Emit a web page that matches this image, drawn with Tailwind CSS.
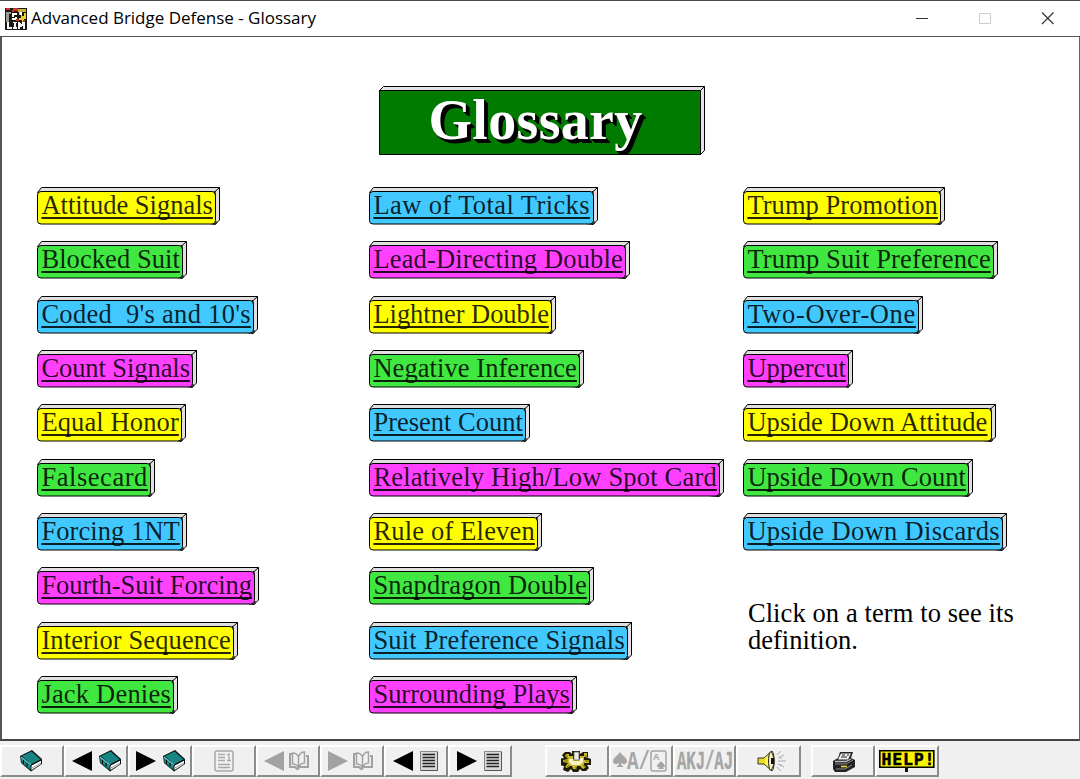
<!DOCTYPE html>
<html lang="en">
<head>
  <meta charset="UTF-8" />
  <meta name="viewport" content="width=device-width, initial-scale=1.0"/>
  <title>Advanced Bridge Defense - Glossary</title>
  <script src="https://cdn.jsdelivr.net/npm/@tailwindcss/browser@4"></script>
</head>
<body class="w-[1080px] h-[779px] overflow-hidden bg-[#f0f0f0] text-black flex flex-col">

  <!-- icons shared by several toolbar buttons -->
  <svg class="hidden">
    <symbol id="book" viewBox="0 0 24 22">
      <path d="M1 6 13 0l10 9v5L12 21.500 2 13z" fill="#0a1414"/>
      <path d="M3 6 12.500 1.500l9 8-9.500 5z" fill="#188484"/>
      <path d="M2 7.500l9.500 8v4.500L2.500 12.500z" fill="#188484"/>
      <path d="M2 7l10 8" stroke="#6accd0" stroke-width="1.200" fill="none"/>
      <path d="M12.500 15.500 22 10.500v3.500l-9.500 6z" fill="#fff"/>
      <path d="M13 18l9-5" stroke="#999" fill="none"/>
      <path d="M12 15.200l10-5.200" stroke="#000" fill="none"/>
      <path d="M4.500 10v3.500M8 13v3.500" stroke="#000" fill="none"/>
    </symbol>
    <symbol id="open-book" viewBox="0 0 22 20">
      <path d="M4 3H2v13h5l2 2 3-2h8V5h-2" fill="none" stroke="#a2a2a2" stroke-width="2"/>
      <path d="M4.500 2v11c3 0 5 1 6 4 1-3 3-5 6-5V1c-3 0-5 2-6 5-1-3-3-4-6-4zM10.500 6v10" fill="none" stroke="#a2a2a2" stroke-width="1.500"/>
    </symbol>
    <symbol id="page" viewBox="0 0 20 22">
      <path d="M1.500 1.500h17v19h-17z" fill="#d8d8d8" stroke="#888"/>
      <path d="M18.500 2v18.500H2" fill="none" stroke="#555"/>
      <path d="M3.500 4.500h12.500M3.500 7.500h12.500M3.500 10.500h12.500M3.500 13.500h12.500M3.500 16.500h12.500" stroke="#222" stroke-width="1.500"/>
    </symbol>
    <symbol id="left" viewBox="0 0 20 20"><path d="M0 10 20 0v20z" fill="currentColor"/></symbol>
    <symbol id="right" viewBox="0 0 20 20"><path d="M20 10 0 0v20z" fill="currentColor"/></symbol>
  </svg>

  <header class="h-[37px] shrink-0 flex items-center bg-white border-t border-t-[#4d454d] border-b border-b-[#555] pl-[5px]">
    <svg class="size-[22px] shrink-0" viewBox="0 0 22 22" shape-rendering="crispEdges">
      <path d="M0 0h22v22H0z" fill="#191814"/>
      <path d="M1 0h4v2h3V0h5v3H9v1H7V2H1z" fill="#d03028"/>
      <path d="M13 1h8v3h-8z" fill="#c9b23a"/>
      <path d="M1 4h5v2H4v8H1z" fill="#9c9a94"/>
      <path d="M7 5h5v2H9v2h3v3H7v-2h3V9H7z" fill="#fff"/>
      <path d="M14 4h3v4h2V5h2v6h-2v4h-2v-3h-3v-2h2V7h-2z" fill="#e8d428"/>
      <path d="M15 4h2v3h-2z" fill="#fff"/>
      <path d="M11 11h3v2h-3zM18 12h2v2h-2z" fill="#c03428"/>
      <path d="M2 14h2v5h3v2H2zM8 14h4v1h-1v4h1v2H8v-2h1v-4H8zM13 14h2l2 3v-3h3v7h-2v-4l-2 3-1-2v3h-2z" fill="#f4f4f4"/>
    </svg>
    <h1 class="ml-[4px] pb-[2px] flex-1 whitespace-nowrap text-[17px] leading-[22px] font-['Open_Sans',sans-serif]"><span data-fit="285" data-font="17px 'Open Sans'">Advanced Bridge Defense - Glossary</span></h1>
    <svg class="w-[160px] h-[35px] shrink-0 overflow-visible" viewBox="0 0 160 35" fill="none">
      <path d="M-4 17.500H8" stroke="#333"/>
      <path d="M59.500 12.500h11v10h-11z" stroke="#ccc"/>
      <path d="M122 11.500l11.500 11.500M133.500 11.500L122 23" stroke="#333" stroke-width="1.200"/>
    </svg>
  </header>

  <main class="h-[704px] shrink-0 bg-white border-l-2 border-l-[#555] border-r border-r-[#666] border-b-2 border-b-[#444]">
    <div class="pt-[49px] pl-[376.500px]">
      <div class="relative w-[327px] h-[70px]">
        <svg class="absolute inset-0 size-full" viewBox="0 0 327 70">
          <path d="M.5 4.500l4-4h321v64l-4 4z" fill="#e4e4e4" stroke="#000"/>
          <path d="M.5 4.500h321v64H.5z" fill="#007b00" stroke="#000"/>
          <path d="M321.500 4.500l4-4" stroke="#000"/>
        </svg>
        <h2 class="relative pl-[50px] text-white font-bold text-[56px] leading-[69px] whitespace-nowrap font-['Liberation_Serif',serif] [text-shadow:1px_1px_0_#000,2px_2px_0_#000,3px_3px_0_#000,4px_4px_0_#000]"><span data-fit="214" data-font="bold 56px 'Liberation Serif'">Glossary</span></h2>
      </div>
    </div>

    <div class="flex pt-[31px] pl-[35.400px] text-[26.500px] font-['Liberation_Serif',serif]">
      <ul id="col1" class="w-[332px] shrink-0 flex flex-col gap-[16.330px]"></ul>
      <ul id="col2" class="w-[374px] shrink-0 flex flex-col gap-[16.330px]"></ul>
      <div class="shrink-0">
        <ul id="col3" class="flex flex-col gap-[16.330px]"></ul>
        <p class="mt-[49px] ml-[4.500px] leading-[27px] whitespace-nowrap"><span data-fit="266" data-font="26.5px 'Liberation Serif'">Click on a term to see its</span><br><span data-fit="110" data-font="26.5px 'Liberation Serif'">definition.</span></p>
      </div>
    </div>
  </main>

  <footer id="toolbar" class="flex-1 flex items-start pt-[4px]">
    <button class="tb w-[64px] pr-0.5"><svg class="w-6 h-[22px]"><use href="#book"/></svg></button>
    <button class="tb w-[64px] pl-0.5"><svg class="size-5"><use href="#left"/></svg><svg class="w-6 h-[22px] ml-0.5"><use href="#book"/></svg></button>
    <button class="tb w-[64px] pl-0.5"><svg class="size-5"><use href="#right"/></svg><svg class="w-6 h-[22px] ml-0.5"><use href="#book"/></svg></button>
    <button class="tb w-[64px]">
      <svg class="w-5 h-[22px]" viewBox="0 0 20 22" fill="none" stroke="#a8a8a8">
        <rect x="1" y="1" width="18" height="20" rx="2" stroke-width="1.500"/>
        <path d="M4 4.500h7M4 7.500h7M4 10.500h7M4 14.500h12M4 17.500h12M13 5l2-1v6M13 10.500h4" stroke-width="1.300"/>
      </svg>
    </button>
    <button class="tb w-[64px] pr-0.5 text-[#a2a2a2]"><svg class="size-5"><use href="#left"/></svg><svg class="w-[22px] h-5"><use href="#open-book"/></svg></button>
    <button class="tb w-[64px] pr-0.5 text-[#a2a2a2]"><svg class="size-5"><use href="#right"/></svg><svg class="w-[22px] h-5"><use href="#open-book"/></svg></button>
    <button class="tb w-[64px]"><svg class="size-5 mr-0.5"><use href="#left"/></svg><svg class="w-5 h-[22px]"><use href="#page"/></svg></button>
    <button class="tb w-[64px]"><svg class="size-5 mr-0.5"><use href="#right"/></svg><svg class="w-5 h-[22px]"><use href="#page"/></svg></button>

    <button class="tb w-[64px] ml-[33px] pr-0.5">
      <svg class="w-[31px] h-[22px]" viewBox="0 0 31 22">
        <path d="M4 2h5l2 2V1h8v3l3-2h5v5h-2l5 2v6h-4l2 3-3 3h-4l-2-2-2 3h-5l-2-3-3 3-5-2 1-4-5-1V9l5-1-2-3z" fill="#1c1a04"/>
        <path d="M5 4h3v2h4v3h7V6h4V3h3v4h-3v3h5v3h-5v2l2 2-3 2-3-3h-3l-1 3h-3l-1-3H9l-3 2-2-1 3-4-5-1v-2l5-1-3-3z" fill="#c8b92a"/>
        <path d="M8 9h4v2h7V8h3v4l-3 3h-8l-3-3z" fill="#fff0c4"/>
        <path d="M13 2h5v8h-5z" fill="#ececec" stroke="#666" stroke-width=".8"/>
        <path d="M6 5v3M3 11h4M8 15l-2 2M15 17v3M22 15l2 2M25 5v3M24 11h4" stroke="#7a7010"/>
      </svg>
    </button>
    <button class="tb w-[64px] pr-0.5">
      <svg class="w-[54px] h-[22px] overflow-visible" viewBox="0 0 54 22" fill="none" stroke="#a5a5a5">
        <path d="M7 2c-2 3-7 6-7 9 0 4 5 4 6 1 0 3-1 4-3 5h8c-2-1-3-2-3-5 1 3 6 3 6-1 0-3-5-6-7-9z" fill="#a5a5a5" stroke="none"/>
        <text x="14" y="18.500" font-family="Liberation Mono,monospace" font-size="25" font-weight="bold" textLength="23" lengthAdjust="spacingAndGlyphs" fill="#a5a5a5" stroke="none">A/</text>
        <rect x="38" y="1" width="15" height="20" rx="2" stroke-width="1.500"/>
        <text x="40" y="10" font-family="Liberation Sans,sans-serif" font-size="9" font-weight="bold" fill="#a5a5a5" stroke="none">A</text>
        <path d="M48 11c-1 2-4 3-4 5 0 1 2 2 3 1l-2 2h6l-2-2c1 1 3 0 3-1 0-2-3-3-4-5z" fill="#a5a5a5" stroke="none"/>
      </svg>
    </button>
    <button class="tb w-[63px]">
      <svg class="w-[56px] h-[22px] overflow-visible" viewBox="0 0 56 22">
        <text x="0" y="19" font-family="Liberation Mono,monospace" font-size="26" font-weight="bold" textLength="56" lengthAdjust="spacingAndGlyphs" fill="#a5a5a5" stroke="#a5a5a5" stroke-width=".4">AKJ/AJ</text>
      </svg>
    </button>
    <button class="tb w-[65px] pl-1.5">
      <svg class="w-[30px] h-[22px]" viewBox="0 0 30 22" fill="none">
        <path d="M1 8h6l8-7c3 3 3 17 0 20l-8-7H1z" fill="#e8dc20" stroke="#333"/>
        <path d="M8 8l6-5v16l-6-5z" fill="#fff45c"/>
        <path d="M13 2c-2 4-2 14 0 18 2 1 4-5 4-9s-2-10-4-9z" fill="#f6efc0" stroke="#222"/>
        <path d="M14 8h3v6h-3z" fill="#111"/>
        <path d="M20 5l4-4M21 8l6-3M21 11h8M21 14l6 3M20 17l4 4M24 7v2M24 14v2" stroke="#aaa"/>
      </svg>
    </button>

    <button class="tb w-[64px] ml-[10px] pl-0.5">
      <svg class="w-6 h-[21px]" viewBox="0 0 24 21">
        <path d="M1 10l5-3 2-6h13l-2 6 4 2v7l-9 5H3l-2-3z" fill="#222"/>
        <path d="M9 2.500h10l-3 6H6z" fill="#eee"/>
        <path d="M10 4h3M15 4h2M9 6h6" stroke="#222"/>
        <path d="M3 10.500h11l5-2.500" stroke="#bbb" stroke-width="1.300" fill="none"/>
        <path d="M3 13h11l7-4M4 18h9l7-4" stroke="#888" fill="none"/>
        <path d="M9 15.500h6" stroke="#e4d830" stroke-width="1.600"/>
      </svg>
    </button>
    <button class="tb w-[64px]">
      <svg class="w-[56px] h-[22px] overflow-visible" viewBox="0 0 56 22">
        <path d="M.8 .8h54v16.500H.8z" fill="#f8f400" stroke="#000" stroke-width="1.600"/>
        <path d="M26 17h3v5h-3z" fill="#111"/>
        <text x="2.500" y="14.800" font-family="DejaVu Sans Mono,monospace" font-size="16.500" font-weight="bold" textLength="53" lengthAdjust="spacing" stroke="#000" stroke-width=".5">HELP!</text>
      </svg>
    </button>
  </footer>

  <script>
    // [term, button width, palette index]
    const columns = {
      col1: [["Attitude Signals", 183, 0], ["Blocked Suit", 150, 1], ["Coded  9's and 10's", 221, 2], ["Count Signals", 160, 3], ["Equal Honor", 149, 0], ["Falsecard", 118, 1], ["Forcing 1NT", 150, 2], ["Fourth-Suit Forcing", 222, 3], ["Interior Sequence", 201, 0], ["Jack Denies", 141, 1]],
      col2: [["Law of Total Tricks", 229, 2], ["Lead-Directing Double", 261, 3], ["Lightner Double", 187, 0], ["Negative Inference", 215, 1], ["Present Count", 161, 2], ["Relatively High/Low Spot Card", 355, 3], ["Rule of Eleven", 173, 0], ["Snapdragon Double", 225, 1], ["Suit Preference Signals", 263, 2], ["Surrounding Plays", 208, 3]],
      col3: [["Trump Promotion", 202, 0], ["Trump Suit Preference", 255, 1], ["Two-Over-One", 180, 2], ["Uppercut", 110, 3], ["Upside Down Attitude", 253, 0], ["Upside Down Count", 230, 1], ["Upside Down Discards", 264, 2]]
    };
    const palette = ["#ffff00", "#40e740", "#40c8ff", "#ff40ff"];

    for (const id in columns) {
      const list = document.getElementById(id);
      columns[id].forEach(([term, w, c]) => {
        const r = w - 5;
        const item = document.createElement('li');
        item.className = "relative h-[38px]";
        item.style.width = w + 'px';
        item.innerHTML = `
          <svg class="absolute inset-0 size-full">
            <path d="M.5 5.500L4.500.500H${w - .5}V33l-4.500 4.500z" fill="#e0dede" stroke="#000"/>
            <rect x=".5" y="4.500" width="${r}" height="32.500" rx="3.500" fill="${palette[c]}" stroke="#000"/>
            <path d="M${r - 1} 5.500L${w - .5} .5M${r - 1} 4.500h1v3M${r - 1} 37h2v-3" fill="none" stroke="#000"/>
          </svg>
          <a class="relative block pl-[4px] leading-[37px] whitespace-pre text-black/85 cursor-pointer"><span class="underline decoration-[1.500px] underline-offset-[3px] [text-decoration-skip-ink:none]" data-fit="${w - 11.5}" data-font="26.5px 'Liberation Serif'">${term}</span></a>`;
        list.appendChild(item);
      });
    }

    document.querySelectorAll('.tb').forEach(b => {
      b.classList.add("h-[32px]", "shrink-0", "flex", "items-center", "justify-center", "gap-1", "border-2", "border-t-white", "border-l-white", "border-r-[#8c8c8c]", "border-b-[#8c8c8c]", "bg-[#f0f0f0]");
    });

    // spread the letters so each label fills its given width
    const ctx = document.createElement('canvas').getContext('2d');
    document.querySelectorAll('[data-fit]').forEach(el => {
      ctx.font = el.dataset.font;
      const diff = el.dataset.fit - ctx.measureText(el.textContent).width;
      el.style.letterSpacing = diff / el.textContent.length + 'px';
    });
  </script>
</body>
</html>
